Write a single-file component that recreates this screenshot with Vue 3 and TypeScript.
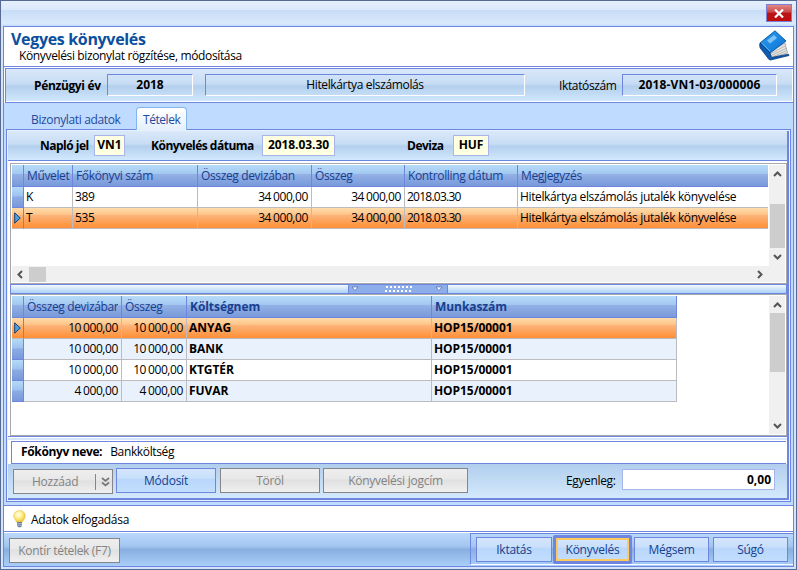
<template>
  <div class="window">
    <div class="titlebar">
      <button class="close" aria-label="Bezárás">
        <svg width="10" height="9" viewBox="0 0 10 9"><path d="M1 .5 9 8.5M9 .5 1 8.5" stroke="#fff" stroke-width="2.2" /></svg>
      </button>
    </div>

    <div class="body">
      <header class="header">
        <div>
          <h1>Vegyes könyvelés</h1>
          <p>Könyvelési bizonylat rögzítése, módosítása</p>
        </div>
        <svg class="book" width="31" height="31" viewBox="0 0 31 31">
          <defs>
            <linearGradient id="cover" x1="0" y1="0" x2="1" y2="1">
              <stop offset="0" stop-color="#2f9df0" />
              <stop offset="1" stop-color="#0873d3" />
            </linearGradient>
          </defs>
          <path d="M10 22 26 13l2.500 10-16.500 5z" fill="#e4e4e0" stroke="#8d9296" stroke-width=".7" />
          <path d="M12 23.500 26 16M12 25.500l15-7M12 27.500l15-6.500" stroke="#a6a8a7" stroke-width=".7" />
          <path d="M1 13 16 .8 27 11 11 23z" fill="url(#cover)" stroke="#0a50a0" stroke-width=".9" />
          <path d="M1 13c-.6 3-.2 5 1 6l8 10.500 1.500.5L30 25.500l-.5-1.300-17 3.300L11 23z" fill="#0d5cae" stroke="#093b7c" stroke-width=".8" />
          <path d="M3.500 13.500 11 21" stroke="#4db2fa" stroke-width="1" />
          <path d="M8 10.500 15 5l3 3-7 5.500z" fill="#7cc3f8" />
        </svg>
      </header>

      <section class="info">
        <b class="year-label">Pénzügyi év</b>
        <div class="sunken year">2018</div>
        <div class="sunken name">Hitelkártya elszámolás</div>
        <span class="file-label">Iktatószám</span>
        <div class="sunken file">2018-VN1-03/000006</div>
      </section>

      <nav class="tabs">
        <a class="tab">Bizonylati adatok</a>
        <a class="tab active">Tételek</a>
      </nav>

      <div class="panel">
        <div class="inner">
          <div class="filter">
            <b class="l1">Napló jel</b><span class="field f1">VN1</span>
            <b class="l2">Könyvelés dátuma</b><span class="field f2">2018.03.30</span>
            <b class="l3">Deviza</b><span class="field f3">HUF</span>
          </div>

          <div class="grid entries">
            <div class="sheet">
              <div class="row head">
                <i></i>
                <span v-for="h in entryHeads" :key="h">{{ h }}</span>
              </div>
              <div v-for="(r, n) in entries" :key="n" class="row" :class="{ selected: n === 1 }">
                <i><svg v-if="n === 1" width="7" height="12" viewBox="0 0 7 12"><path d="M.7 .8 6.300 6 .7 11.200z" fill="#4b9ee0" stroke="#164270" /></svg></i>
                <span v-for="(c, k) in r" :key="k" :class="{ num: k === 2 || k === 3, date: k === 4 }">{{ c }}</span>
              </div>
            </div>
            <div class="vscroll">
              <svg class="chev" viewBox="0 0 9 6"><path d="M1 5 4.500 1.500 8 5" /></svg>
              <div class="thumb"></div>
              <svg class="chev" viewBox="0 0 9 6"><path d="M1 1 4.500 4.500 8 1" /></svg>
            </div>
            <div class="hscroll">
              <svg class="hchev" viewBox="0 0 6 9"><path d="M5 1 1.500 4.500 5 8" /></svg>
              <div class="hthumb"></div>
              <svg class="hchev" viewBox="0 0 6 9"><path d="M1 1 4.500 4.500 1 8" /></svg>
            </div>
          </div>

          <div class="splitter">
            <div class="grip">
              <svg width="98" height="8" viewBox="0 0 98 8">
                <path v-for="x in [3, 87]" :key="x" :d="`M${x} 2h6l-3 3.500z`" fill="#fff" stroke="#4d6bb5" stroke-width=".7" />
                <template v-for="n in 7" :key="n">
                  <path :d="`M${33 + n * 4} 1h2v2h-2zM${32 + n * 4} 5h2v2h-2z`" fill="#fff" />
                </template>
              </svg>
            </div>
          </div>

          <div class="grid costs">
            <div class="sheet">
              <div class="row head">
                <i></i>
                <span v-for="(h, k) in costHeads" :key="k"><em>{{ h }}</em></span>
              </div>
              <div v-for="(r, n) in costs" :key="n" class="row" :class="{ selected: n === 0, odd: n % 2 === 1 }">
                <i><svg v-if="n === 0" width="7" height="12" viewBox="0 0 7 12"><path d="M.7 .8 6.300 6 .7 11.200z" fill="#4b9ee0" stroke="#164270" /></svg></i>
                <span v-for="(c, k) in r" :key="k" :class="{ num: k < 2 }">{{ c }}</span>
              </div>
            </div>
            <div class="vscroll">
              <svg class="chev" viewBox="0 0 9 6"><path d="M1 5 4.500 1.500 8 5" /></svg>
              <div class="thumb"></div>
              <svg class="chev" viewBox="0 0 9 6"><path d="M1 1 4.500 4.500 8 1" /></svg>
            </div>
          </div>

          <div class="gap"></div>
          <div class="account"><b>Főkönyv neve:</b><span>Bankköltség</span></div>
          <div class="toolbar">
            <button class="btn disabled add">
              <span>Hozzáad</span>
              <svg width="9" height="10" viewBox="0 0 9 10"><path d="M1 1 4.500 4 8 1M1 5.500l3.500 3L8 5.500" fill="none" stroke="#777" stroke-width="1.700" /></svg>
            </button>
            <button class="btn edit">Módosít</button>
            <button class="btn disabled del">Töröl</button>
            <button class="btn disabled title">Könyvelési jogcím</button>
            <label>Egyenleg:</label>
            <div class="balance">0,00</div>
          </div>
        </div>
      </div>

      <div class="hint">
        <svg width="13" height="18" viewBox="0 0 13 18">
          <defs>
            <radialGradient id="bulb" cx=".4" cy=".35" r=".65">
              <stop offset="0" stop-color="#fffef0" />
              <stop offset=".5" stop-color="#ffee8c" />
              <stop offset="1" stop-color="#eec32f" />
            </radialGradient>
          </defs>
          <path d="M6.500.6C3 .6.700 3 .700 6c0 2.500 2.200 3.800 2.800 6h6c.6-2.200 2.800-3.500 2.800-6 0-3-2.300-5.400-5.800-5.400z" fill="url(#bulb)" stroke="#e2c964" stroke-width=".7" />
          <path d="M4 12h5v4l-1.500 1.300h-2L4 16z" fill="#6c7f9c" />
          <path d="M4 13.700h5M4 15.300h5" stroke="#c3cddc" stroke-width=".7" />
        </svg>
        <span>Adatok elfogadása</span>
      </div>

      <footer class="footer">
        <button class="btn disabled kontir">Kontír tételek (F7)</button>
        <div class="actions">
          <button class="btn">Iktatás</button>
          <button class="btn primary">Könyvelés</button>
          <button class="btn">Mégsem</button>
          <button class="btn">Súgó</button>
        </div>
      </footer>
    </div>
  </div>
</template>

<script setup lang="ts">
const entryHeads: string[] = ['Művelet', 'Főkönyvi szám', 'Összeg devizában', 'Összeg', 'Kontrolling dátum', 'Megjegyzés'];

const entries: string[][] = [
  ['K', '389', '34 000,00', '34 000,00', '2018.03.30', 'Hitelkártya elszámolás jutalék könyvelése'],
  ['T', '535', '34 000,00', '34 000,00', '2018.03.30', 'Hitelkártya elszámolás jutalék könyvelése'],
];

const costHeads: string[] = ['Összeg devizában', 'Összeg', 'Költségnem', 'Munkaszám'];

const costs: string[][] = [
  ['10 000,00', '10 000,00', 'ANYAG', 'HOP15/00001'],
  ['10 000,00', '10 000,00', 'BANK', 'HOP15/00001'],
  ['10 000,00', '10 000,00', 'KTGTÉR', 'HOP15/00001'],
  ['4 000,00', '4 000,00', 'FUVAR', 'HOP15/00001'],
];
</script>

<style>
body {
  margin: 0;
  overflow: hidden;
}
</style>

<style scoped>
* {
  box-sizing: border-box;
}

.window {
  width: 797px;
  height: 570px;
  border: 1px solid #566a93;
  background: #d3e4fa;
  font: 12px/16px "Open Sans", "Noto Sans", sans-serif;
  letter-spacing: -0.36px;
  color: #000;
  white-space: nowrap;
}

.titlebar {
  height: 25px;
  display: flex;
  justify-content: flex-end;
  padding: 3px 4px 0 0;
  background: linear-gradient(#e6f0fd, #dbe9fb 35%, #c8dcf7 38%, #d8eafc 90%, #c3dcfb);
}

.close {
  width: 26px;
  height: 18px;
  padding: 0;
  border: 1px solid #7c7fd4;
  background: linear-gradient(#e08a88, #cc4747 45%, #b81416 50%, #c20c0c);
  display: flex;
  align-items: center;
  justify-content: center;
}

.body {
  height: 541px;
  margin: 0 2px;
  border: 1px solid #6f86e0;
  background: #bfdbff;
  display: flex;
  flex-direction: column;
}

.header {
  height: 40px;
  border-bottom: 1px solid #6f86e0;
  background: #fff;
  display: flex;
  justify-content: space-between;
  padding: 0 3px 0 7px;
}

h1 {
  margin: 3px 0 0;
  font-size: 16px;
  line-height: 19px;
  letter-spacing: -0.33px;
  color: #0b4f9e;
}

p {
  margin: 0 0 0 8px;
  line-height: 14px;
}

.book {
  margin-top: 3px;
}

.info {
  height: 35px;
  margin-top: 1px;
  margin-left: 1px;
  border-top: 1px solid #6f86e0;
  border-left: 1px solid #6f86e0;
  border-bottom: 1px solid #6f86e0;
  box-shadow: 0 -1px #fff, -1px 0 #fff, inset -1px -1px #fff;
  background: linear-gradient(#d9e8f9, #c7dcf4 45%, #b3cfee 52%, #d3e9fc);
  display: flex;
  align-items: center;
}

.sunken {
  height: 22px;
  margin-top: -2px;
  border: 1px solid #fff;
  border-top-color: #6f86e0;
  border-left-color: #6f86e0;
  line-height: 19px;
  text-align: center;
}

.year-label {
  width: 73px;
  margin-left: 28px;
}

.year {
  width: 86px;
  font-weight: bold;
  letter-spacing: 0;
}

.name {
  width: 320px;
  margin-left: 12px;
}

.file-label {
  width: 63px;
  margin-left: 34px;
}

.file {
  width: 155px;
  font-weight: bold;
  letter-spacing: 0.15px;
}

.tabs {
  height: 26px;
  padding: 4px 0 0 12px;
  display: flex;
  color: #1f4a99;
}

.tab {
  width: 120px;
  height: 22px;
  padding: 5px 0 0 15px;
}

.tab.active {
  width: 51px;
  height: 23px;
  padding: 4px 0 0 6px;
  border: 1px solid #84b4ee;
  border-bottom: 0;
  border-radius: 4px 4px 0 0;
  background: linear-gradient(#fff, #e4effc);
  letter-spacing: -0.45px;
  position: relative;
}

.panel {
  width: 785px;
  height: 373px;
  margin-left: 2px;
  border: 1px solid #6f86e0;
  background: #e7f1fd;
  padding: 1px;
}

.inner {
  height: 369px;
  border-right: 2px solid #6f86e0;
  border-bottom: 2px solid #6f86e0;
  background: #fff;
}

.filter {
  height: 30px;
  border-bottom: 1px solid #6f86e0;
  margin-bottom: 2px;
  background: linear-gradient(#dbe9f9, #c7dcf4 45%, #b3cfee 52%, #d3e9fc);
  display: flex;
  align-items: center;
}

.filter b {
  padding-top: 1px;
  letter-spacing: -0.5px;
}

.field {
  height: 21px;
  border: 1px solid #a9b5ea;
  background: #ffffe1;
  line-height: 18px;
  text-align: center;
  font-weight: bold;
  letter-spacing: -0.05px;
}

.l1 { width: 54px; margin-left: 32px; }
.l2 { width: 111px; margin-left: 26px; }
.l3 { width: 46px; margin-left: 72px; }
.f1 { width: 31px; }
.f2 { width: 73px; }
.f3 { width: 36px; }

.grid {
  margin-left: 2px;
  border: 1px solid #a9a9ad;
  padding: 1px;
  display: grid;
  grid-template-columns: 1fr 16px;
  background: #fff;
}

.entries {
  height: 121px;
  grid-template-rows: 101px 16px;
}

.costs {
  height: 142px;
}

.row {
  display: grid;
  height: 21px;
}

.entries .row {
  width: 756px;
  grid-template-columns: 12px 49px 125px 114px 93px 113px 250px;
}

.costs .row {
  width: 665px;
  grid-template-columns: 12px 98px 65px 245px 245px;
}

.row i,
.row span {
  border-right: 1px solid #bcbcc0;
  border-bottom: 1px solid #bcbcc0;
  overflow: hidden;
}

.row span {
  padding-left: 2px;
  line-height: 19px;
}

.row .num {
  text-align: right;
  padding-right: 3px;
  word-spacing: -0.8px;
  letter-spacing: -0.4px;
}

.row .date {
  letter-spacing: -0.75px;
}

.row i {
  display: flex;
  align-items: center;
  padding-left: 2px;
  border-color: #6f86e0;
  background: linear-gradient(#b4daf8, #9dc3ee 45%, #8cabe4 50%, #7899da);
}

.row.head {
  height: 22px;
}

.head i,
.head span {
  border-color: #6f86e0;
  background: linear-gradient(#b7dcf9, #a2c8f0 42%, #93b1e6 45%, #7899da);
}

.head span {
  padding-left: 3px;
  line-height: 21px;
  color: #17408f;
}

.head em {
  display: block;
  margin-right: 3px;
  overflow: hidden;
  font-style: normal;
}

.entries .row span:last-child {
  border-right: 0;
}

.odd span {
  background: #e9f1fc;
}

.selected i,
.selected span {
  background: linear-gradient(#ffdcab, #fec58a 32%, #fcb47a 36%, #ff8f37);
}

.selected i {
  border-right-color: #6f86e0;
  border-bottom-color: #bcbcc0;
}

.costs .row span:nth-child(n + 4) {
  font-weight: bold;
  letter-spacing: -0.07px;
}

.vscroll,
.hscroll {
  background: #f0f0f0;
}

.vscroll {
  display: flex;
  flex-direction: column;
  align-items: center;
}

.chev {
  width: 9px;
  height: 6px;
  margin: 6px 0 0;
}

.chev path,
.hchev path {
  fill: none;
  stroke: #555;
  stroke-width: 2;
}

.thumb {
  width: 15px;
  background: #cdcdcd;
}

.entries .thumb {
  height: 44px;
  margin-top: 27px;
}

.costs .thumb {
  height: 59px;
  margin-top: 5px;
}

.costs .thumb + .chev {
  margin-top: 51px;
}

.hscroll {
  grid-column: 1 / 3;
  display: flex;
  align-items: center;
}

.hchev {
  width: 6px;
  height: 9px;
  margin-left: 5px;
}

.hthumb {
  width: 17px;
  height: 15px;
  margin-left: 6px;
  margin-right: 706px;
  background: #cdcdcd;
}

.splitter {
  height: 10px;
  margin-left: 2px;
  border: 1px solid #6f86e0;
  background: linear-gradient(#f4f9ff, #a9d1f8);
}

.grip {
  width: 100px;
  height: 8px;
  margin-left: 337px;
  border: solid #6f86e0;
  border-width: 0 1px;
  background: #8caeea;
}

.grip svg {
  display: block;
}

.gap {
  height: 5px;
  border-top: 1px solid #6f86e0;
  background: linear-gradient(#fff 1px, #d5e6fa 1px 3px, #fff 3px);
}

.account {
  height: 23px;
  margin: 0 1px 0 3px;
  border: 1px solid #6f86e0;
  border-right: 0;
  box-shadow: -3px 0 #fff;
  padding: 2px 0 0 9px;
}

.account span {
  margin-left: 8px;
}

.toolbar {
  height: 34px;
  background: linear-gradient(#b1ceed, #d3e9fc);
  display: flex;
  align-items: flex-start;
  padding-top: 4px;
}

.btn {
  height: 25px;
  padding: 0;
  border: 1px solid #6f86e0;
  background: linear-gradient(#d5e6fc, #c8dffb 40%, #b9d7fc 45%, #c3defd);
  font: inherit;
  letter-spacing: -0.25px;
  color: #17408f;
}

.btn.disabled {
  border-color: #86868a;
  background: linear-gradient(#eee, #e8e8e8 42%, #e0e0e0 48%, #f0f0f0);
  color: #838383;
}

.add {
  width: 100px;
  margin: 1px 3px 0 5px;
  display: flex;
  align-items: center;
}

.add span {
  width: 64px;
  margin-left: 18px;
  border-right: 1px solid #86868a;
  text-align: left;
  margin-right: 5px;
}

.edit { width: 100px; margin-right: 4px; }
.del { width: 100px; margin-right: 3px; }
.title { width: 145px; }

label {
  width: 56px;
  margin: 5px 0 0 98px;
}

.balance {
  width: 153px;
  height: 21px;
  margin-top: 1px;
  border: 1px solid #a9b5ea;
  background: #fff;
  padding-right: 3px;
  line-height: 19px;
  text-align: right;
  font-weight: bold;
  letter-spacing: 0;
}

.hint {
  height: 27px;
  margin-top: 3px;
  border: 1px solid #6f86e0;
  border-width: 1px 0;
  background: #fff;
  display: flex;
  align-items: center;
  padding-left: 9px;
}

.hint span {
  margin: 2px 0 0 5px;
  letter-spacing: -0.3px;
}

.footer {
  height: 34px;
  border-top: 1px solid #fff;
  background: linear-gradient(#bad8fb, #a3c6f0 40%, #88afe0 50%, #a9cff8);
  display: flex;
  align-items: flex-start;
  justify-content: space-between;
}

.kontir {
  width: 111px;
  margin: 5px 0 0 5px;
  letter-spacing: -0.33px;
}

.actions {
  width: 323px;
  height: 32px;
  border-left: 1px solid #6f86e0;
  border-top: 1px solid #6f86e0;
  border-bottom: 1px solid #fff;
  display: grid;
  grid-template-columns: 76px 78px 75px 75px;
  column-gap: 2px;
  padding: 3px 0 0 5px;
}

.actions .btn:last-child {
  margin-left: 2px;
  margin-right: -2px;
}

.actions .primary {
  height: 29px;
  margin: -2px 0 0 -1px;
  width: 79px;
  border: 3px solid #6f86e0;
  border-radius: 2px;
  box-shadow: inset 0 0 0 2px #ffc95c;
}
</style>
